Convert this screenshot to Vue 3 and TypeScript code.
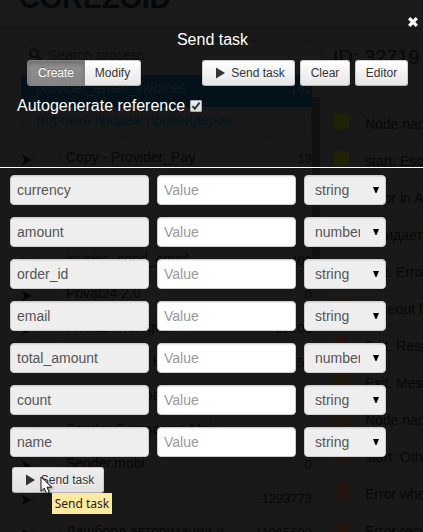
<script setup lang="ts">
import { ref } from 'vue'

interface Param {
  name: string
  type: 'string' | 'number'
  value: string
}

const params = ref<Param[]>([
  { name: 'currency', type: 'string', value: '' },
  { name: 'amount', type: 'number', value: '' },
  { name: 'order_id', type: 'string', value: '' },
  { name: 'email', type: 'string', value: '' },
  { name: 'total_amount', type: 'number', value: '' },
  { name: 'count', type: 'string', value: '' },
  { name: 'name', type: 'string', value: '' },
])

const autogenerate = ref(true)
const mode = ref<'create' | 'modify'>('create')

const processes = [
  { title: 'Copy - Provider_Pay', count: '13', bold: false },
  { title: 'Оповещена', count: '', bold: true },
  { title: '', count: '', bold: false },
  { title: 'invoice_send_email', count: '409', bold: false },
  { title: 'Privat24 2.0', count: '0', bold: false },
  { title: 'Privat24.Telegram', count: '27103', bold: false },
  { title: 'Provider_pay Н', count: '156', bold: false },
  { title: 'Sender Compa', count: '', bold: false },
  { title: 'Sender Companies Main', count: '0', bold: false },
  { title: 'Sender.mobi', count: '0', bold: false },
  { title: '', count: '1293773', bold: false },
  { title: 'Дашборд авторизации и', count: '11065602', bold: false },
]

const nodes = [
  { title: 'Node name', tone: 'yellow' },
  { title: 'start: Escalation', tone: 'yellow' },
  { title: 'Error in API', tone: 'yellow' },
  { title: 'Ожидает', tone: 'orange' },
  { title: 'Exit. Error', tone: 'red' },
  { title: 'Timeout from', tone: 'red' },
  { title: 'Exit. Result', tone: 'red' },
  { title: 'Exit. Message', tone: 'orange' },
  { title: 'Node name', tone: 'orange' },
  { title: 'start: Other', tone: 'red' },
  { title: 'Error when', tone: 'brown' },
  { title: 'Error result', tone: 'brown' },
]
</script>

<template>
  <div class="screen">
    <div class="page">
      <header class="topbar"><span class="logo">COREZOID</span></header>
      <div class="columns">
        <section class="left">
          <div class="search">
            <svg width="13" height="13" viewBox="0 0 13 13"><circle cx="5.2" cy="5.2" r="3.9" fill="none" stroke="#0a0a0a" stroke-width="2" /><path d="M8 8l4 4" stroke="#0a0a0a" stroke-width="2.4" /></svg>
            <span>Search process</span>
          </div>
          <div class="tree">
            <div class="selected"><span>provider_email_invoices</span><em>161</em></div>
            <div class="link">Воронка продаж провайдеров</div>
            <div v-for="(p, i) in processes" :key="i" class="process">
              <svg class="arrow" width="11" height="10" viewBox="0 0 11 10"><path d="M1 0l9.5 5L1 10l2.4-5z" fill="#050505" /></svg>
              <i class="folder"></i>
              <span class="ptitle" :class="{ bold: p.bold }">{{ p.title }}</span>
              <em>{{ p.count }}</em>
            </div>
          </div>
        </section>
        <div class="gutter"><div class="thumb"></div></div>
        <section class="right">
          <h1>ID: 32719</h1>
          <div v-for="(n, i) in nodes" :key="i" class="node">
            <i class="mark" :class="n.tone"></i><span>{{ n.title }}</span>
          </div>
        </section>
      </div>
    </div>

    <div class="dialog">
      <div class="head">
        <svg class="close" width="12" height="12" viewBox="0 0 12 12"><path d="M2.2 2.2l7.6 7.6M9.8 2.2l-7.6 7.6" stroke="#fff" stroke-width="3.3" /></svg>
        <h2>Send task</h2>
        <div class="toolbar">
          <div class="group">
            <button class="btn first" :class="{ active: mode === 'create' }" @click="mode = 'create'">Create</button>
            <button class="btn last" :class="{ active: mode === 'modify' }" @click="mode = 'modify'">Modify</button>
          </div>
          <div class="actions">
            <button class="btn send"><svg width="9" height="12" viewBox="0 0 9 12"><path d="M0 .5L9 6 0 11.5z" fill="#333" /></svg>Send task</button>
            <button class="btn clear">Clear</button>
            <button class="btn editor">Editor</button>
          </div>
        </div>
        <label class="auto" @click.prevent="autogenerate = !autogenerate">
          <span>Autogenerate reference</span>
          <span class="check"><svg v-if="autogenerate" width="10" height="10" viewBox="0 0 10 10"><path d="M1.5 5.2l2.3 2.6L8.6 1.7" fill="none" stroke="#333" stroke-width="2" /></svg></span>
        </label>
      </div>
      <div class="fields">
        <div v-for="p in params" :key="p.name" class="field">
          <div class="box key">{{ p.name }}</div>
          <input v-model="p.value" class="box value" placeholder="Value" />
          <div class="box type"><span>{{ p.type }}</span><svg width="6" height="6" viewBox="0 0 6 6"><path d="M0 0h6L3.5 6h-1z" fill="#000" /></svg></div>
        </div>
        <div class="submit">
          <button class="btn bottom"><svg width="9" height="12" viewBox="0 0 9 12"><path d="M0 .5L9 6 0 11.5z" fill="#333" /></svg>Send task</button>
          <svg class="cursor" width="13" height="19" viewBox="0 0 13 19"><path d="M1 1v14.2l3.3-3 2.3 5.3 2.7-1.2-2.3-5.1h4.8z" fill="#fff" stroke="#111" stroke-width="1" /></svg>
          <span class="tooltip">Send task</span>
        </div>
      </div>
    </div>
  </div>
</template>

<style>
body { margin: 0; background: #191919; }
</style>

<style scoped>
* { box-sizing: border-box; }
.screen { position: relative; width: 423px; height: 532px; overflow: hidden; background: #191919; font-family: "Liberation Sans", Arial, sans-serif; }
.page { height: 532px; overflow: hidden; color: #070707; font-size: 14px; white-space: nowrap; }
.topbar { display: flex; height: 29px; border-bottom: 1px solid #131313; background: #1a1a1a; }
.logo { height: 20px; margin-left: 19px; margin-top: -12px; font-size: 29px; line-height: 20px; font-weight: bold; letter-spacing: -.2px; color: #05080a; }
.columns { display: flex; }
.left { width: 312px; padding-left: 21px; }
.search { width: 301px; height: 29px; margin-top: 11px; border: 1px solid #151515; border-radius: 15px; display: flex; align-items: center; gap: 6px; padding-left: 7px; color: #0d0d0d; }
.tree { margin-top: 6px; width: 291px; }
.selected { height: 32px; background: #02111a; display: flex; justify-content: space-between; padding-left: 15px; line-height: 27px; color: #161b1e; }
.link { height: 32px; margin-bottom: 1px; padding-left: 14px; line-height: 27px; color: #03151f; border: 1px dashed #131313; border-top: 0; }
em { font-style: normal; font-size: 13px; }
.process { display: flex; align-items: center; height: 34px; }
.arrow { margin-top: 6px; }
.folder { width: 27px; height: 19px; margin-left: 1px; margin-top: 3px; border: 1px solid #151515; border-radius: 2px; }
.ptitle { flex: 1; padding-left: 6px; }
.process em { padding-top: 3px; }
.bold { font-weight: bold; }
.gutter { width: 8px; padding-top: 68px; }
.thumb { height: 162px; background: #111; }
.right { flex: 1; padding-left: 6px; min-width: 0; }
h1 { margin: 0; padding: 0 0 0 7px; height: 76px; font-size: 20px; font-weight: normal; line-height: 56px; }
.node { display: flex; align-items: center; height: 37px; padding-left: 8px; border-top: 1px solid #151515; }
.mark { width: 15px; height: 15px; margin-right: 16px; margin-top: -5px; border-radius: 3px; flex: none; }
.yellow { background: #202205; }
.orange { background: #22170d; }
.red { background: #21130e; }
.brown { background: #23150f; }

.dialog { position: absolute; inset: 0; color: #fff; }
.head { position: relative; height: 168px; border-bottom: 1px solid #fff; }
.close { position: absolute; left: 407px; top: 16px; }
h2 { margin: 0; padding-top: 30px; padding-left: 2px; height: 60px; font-size: 16px; font-weight: normal; line-height: 19px; text-align: center; }
.toolbar { display: flex; justify-content: space-between; padding: 0 15px 0 27px; }
.group { display: flex; }
.actions { display: flex; gap: 5px; }
.btn { height: 26px; margin: 0; padding: 0; display: flex; align-items: center; justify-content: center; border: 1px solid #ccc; border-bottom-color: #b3b3b3; border-radius: 3px; font-family: inherit; font-size: 12px; line-height: 18px; color: #333; text-shadow: 0 1px 1px rgba(255, 255, 255, .75); background: linear-gradient(#fff, #e6e6e6); }
.first { width: 58px; border-radius: 3px 0 0 3px; }
.last { width: 56px; border-left: 0; border-radius: 0 3px 3px 0; }
.active { color: #fff; border-color: #858585; background: linear-gradient(#858585, #8e8e8e 30%, #858585); box-shadow: inset 0 2px 4px rgba(0, 0, 0, .2); text-shadow: 0 -1px 0 rgba(0, 0, 0, .25); }
.send { width: 93px; gap: 6px; padding-left: 4px; }
.clear { width: 50px; }
.editor { width: 53px; }
.auto { display: flex; align-items: center; height: 20px; margin: 10px 0 0 17px; font-size: 16px; gap: 5px; }
.check { width: 12px; height: 12px; background: linear-gradient(#eee, #ddd); border: 1px solid #aaa; border-radius: 1px; display: flex; }
.fields { padding: 7px 10px 0; }
.field { display: flex; gap: 8px; height: 42px; }
.box { height: 30px; border: 1px solid #ccc; border-radius: 4px; font-family: inherit; font-size: 14px; line-height: 28px; color: #555; background: #eee; box-shadow: inset 0 1px 1px rgba(0, 0, 0, .075); }
.key { width: 139px; padding-left: 6px; }
.value { width: 139px; padding: 0 6px; background: #fff; }
.value::placeholder { color: #999; opacity: 1; }
.type { width: 82px; padding: 0 6px 0 10px; display: flex; align-items: center; justify-content: space-between; }
.type span { width: 45px; overflow: hidden; white-space: nowrap; }
.submit { position: relative; padding: 0 0 0 2px; margin-top: -2px; }
.bottom { width: 92px; gap: 6px; background: linear-gradient(#eee, #e2e2e2); padding-left: 4px; }
.cursor { position: absolute; left: 30px; top: 9px; filter: drop-shadow(1px 1px 1px rgba(0, 0, 0, .4)); }
.tooltip { position: absolute; left: 42px; top: 26px; width: 60px; height: 21px; background: #ffe9a0; color: #222; font-family: "Noto Sans", sans-serif; font-size: 12px; line-height: 21px; text-align: center; white-space: nowrap; }
</style>
